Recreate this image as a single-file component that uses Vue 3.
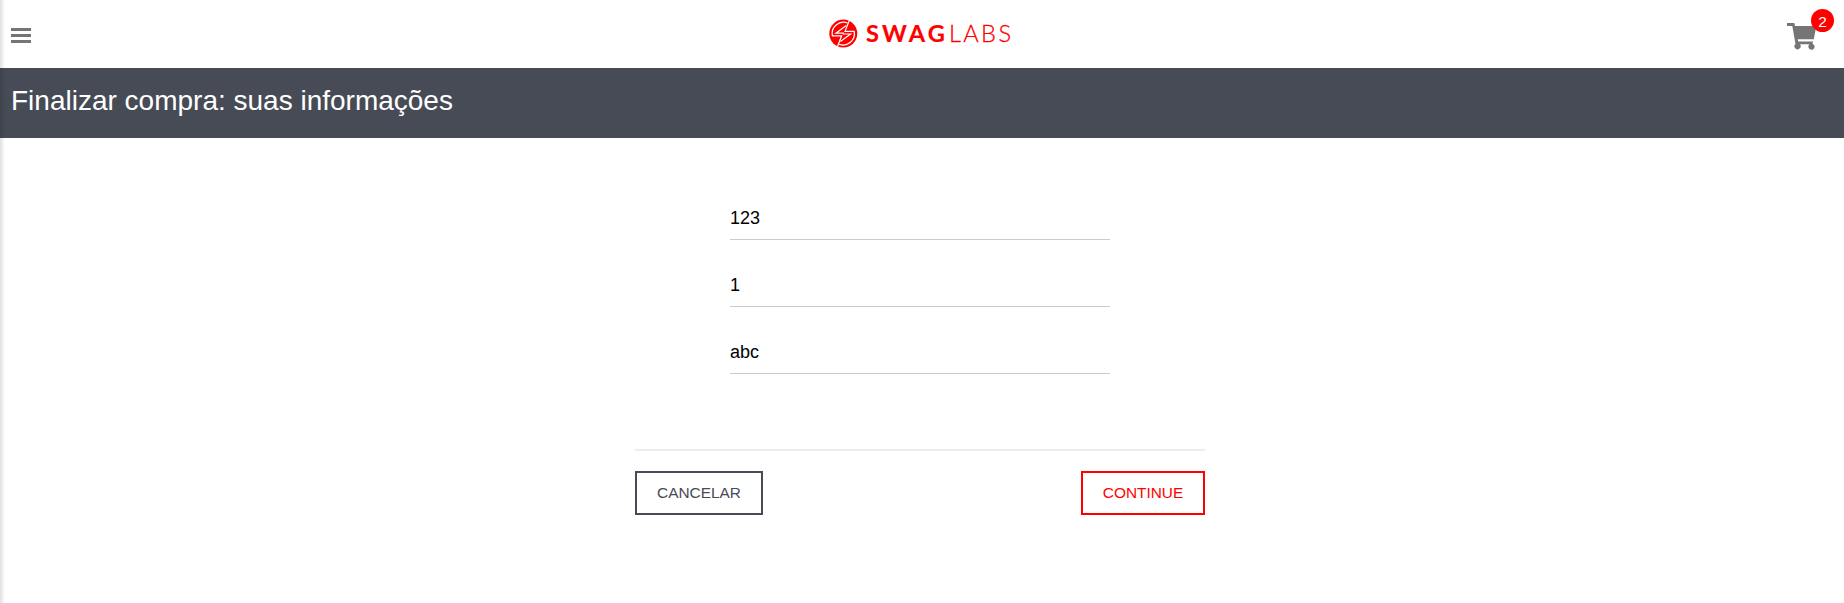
<script setup>
import { ref } from 'vue'

const fields = ref(['123', '1', 'abc'])
const cartCount = 2
</script>

<template>
  <div class="page">
    <header class="header">
      <button class="menu" aria-label="Menu"><i></i><i></i><i></i></button>
      <svg class="logo" width="184" height="32" viewBox="0 0 184 32">
        <circle cx="15.3" cy="15.6" r="14" fill="#f00" />
        <g fill="none" stroke="#fff" stroke-width="1.2">
          <path d="M19.5 5 A11.3 11.3 0 0 0 4.4 17.8 L13.6 17.8 L9 30" />
          <path d="M11.1 26.2 A11.3 11.3 0 0 0 26.2 13.4 L17 13.4 L21.8 1.2" />
          <path d="M18.2 7.6 L8 15.2 L16 15.2" />
          <path d="M12.4 23.6 L22.6 16 L14.6 16" />
        </g>
        <text class="bold" x="38" y="24.2" textLength="78.8" lengthAdjust="spacing">SWAG</text>
        <text class="thin" x="121" y="24.2" textLength="62" lengthAdjust="spacing">LABS</text>
      </svg>
      <div class="cart">
        <svg width="30" height="27" viewBox="0 0 30 27" fill="#757575">
          <path d="M0 0 H7.3 L8 3 H29.3 L26.8 16.3 H10.7 L11.2 18.4 H26 L25.5 20.7 A3.1 3.1 0 1 1 22.4 21.3 H13 A3.1 3.1 0 1 1 8.5 20.9 L5.3 3 H0 Z" />
        </svg>
        <span class="badge">{{ cartCount }}</span>
      </div>
    </header>
    <h1 class="title">Finalizar compra: suas informações</h1>
    <form class="checkout" @submit.prevent>
      <div class="fields">
        <input v-for="(value, i) in fields" :key="i" v-model="fields[i]" type="text" />
      </div>
      <div class="actions">
        <button class="cancel" type="button">CANCELAR</button>
        <button class="continue" type="submit">CONTINUE</button>
      </div>
    </form>
    <div class="edge"></div>
  </div>
</template>

<style>
body { margin: 0; background: #fff; }
</style>

<style scoped>
.page {
  position: relative;
  height: 603px;
  overflow: hidden;
  font-family: "Liberation Sans", Arial, sans-serif;
}
.header {
  height: 68px;
  box-sizing: border-box;
  display: grid;
  grid-template-columns: 1fr 184px 1fr;
  align-items: start;
  padding: 0 27px 0 11px;
}
.menu {
  display: flex;
  flex-direction: column;
  gap: 3px;
  width: 20px;
  margin: 28px 0 0;
  padding: 0;
  border: 0;
  background: none;
}
.menu i { height: 3px; width: 20px; background: #757575; }
.logo { margin: 18px 0 0 6px; overflow: visible; }
.logo text { font-family: Lato, sans-serif; font-size: 23.6px; fill: #f00; }
.logo .bold { font-weight: 700; stroke: #f00; stroke-width: .2px; }
.logo .thin { font-weight: 300; stroke: #f00; stroke-width: .3px; }
.cart { position: relative; justify-self: end; width: 30px; height: 27px; margin-top: 23px; }
.cart svg { display: block; }
.badge {
  position: absolute;
  left: 24px;
  top: -14px;
  width: 23px;
  height: 23px;
  border-radius: 50%;
  background: #f00;
  color: #fff;
  font-size: 15.4px;
  line-height: 25px;
  text-align: center;
}
.title {
  height: 70px;
  margin: 0;
  padding-left: 11px;
  background: #474b56;
  color: #fff;
  font-size: 28px;
  font-weight: 400;
  line-height: 65px;
  box-sizing: border-box;
}
.checkout { width: 570px; margin: 0 0 0 635px; }
.fields {
  display: flex;
  flex-direction: column;
  gap: 27px;
  padding: 62px 95px 75px;
  border-bottom: 2px solid #ededed;
}
.fields input {
  height: 40px;
  box-sizing: border-box;
  padding: 0 0 2px;
  border: 0;
  border-bottom: 1px solid #ccc;
  outline: 0;
  font: 18px "Liberation Sans", Arial, sans-serif;
  color: #000;
}
.actions { display: flex; justify-content: space-between; padding-top: 20px; }
.actions button {
  height: 44px;
  padding: 0;
  background: #fff;
  border: 2px solid;
  font: 15.4px/18px "Liberation Sans", Arial, sans-serif;
}
.actions .cancel { width: 128px; color: #474b56; }
.actions .continue { width: 124px; color: #f00; }
.edge {
  position: absolute;
  left: 0;
  top: 0;
  width: 5px;
  height: 100%;
  background: linear-gradient(to right, rgba(0, 0, 0, .12), rgba(0, 0, 0, 0));
}
</style>
